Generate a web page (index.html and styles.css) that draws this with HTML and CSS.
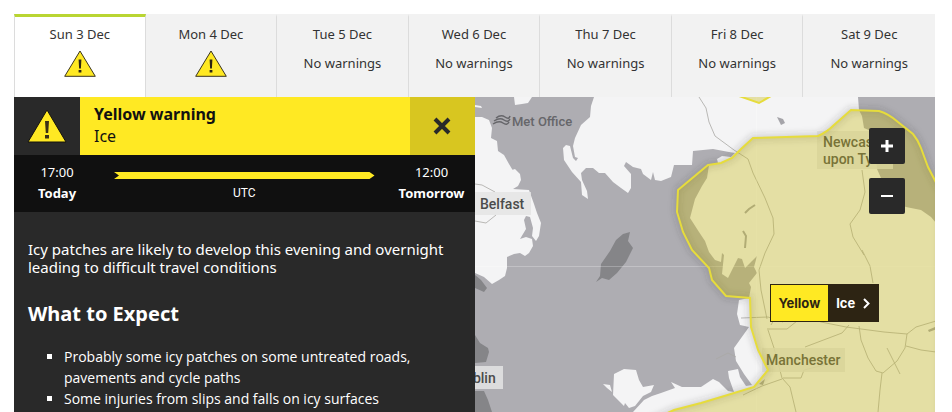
FILE: index.html
```html
<!DOCTYPE html>
<html lang="en">
<head>
  <meta charset="UTF-8">
  <meta name="viewport" content="width=device-width, initial-scale=1.0">
  <title>UK weather warnings</title>
  <link rel="stylesheet" href="styles.css">
</head>
<body>
  <nav class="days" aria-label="Warning days">
    <button class="day active">
      <span>Sun 3 Dec</span>
      <svg class="day-icon" viewBox="0 0 32 27" role="img" aria-label="Yellow warning">
        <path d="M16 1 31.3 26.3H.7Z" fill="#ffe923" stroke="#3a3420"/>
        <path d="M14.6 9.5h2.8l-.5 9h-1.8zM14.6 20h2.8v2.6h-2.8z" fill="#2d2413"/>
      </svg>
    </button>
    <button class="day">
      <span>Mon 4 Dec</span>
      <svg class="day-icon" viewBox="0 0 32 27" role="img" aria-label="Yellow warning">
        <path d="M16 1 31.3 26.3H.7Z" fill="#ffe923" stroke="#3a3420"/>
        <path d="M14.6 9.5h2.8l-.5 9h-1.8zM14.6 20h2.8v2.6h-2.8z" fill="#2d2413"/>
      </svg>
    </button>
    <button class="day"><span>Tue 5 Dec</span><span>No warnings</span></button>
    <button class="day"><span>Wed 6 Dec</span><span>No warnings</span></button>
    <button class="day"><span>Thu 7 Dec</span><span>No warnings</span></button>
    <button class="day"><span>Fri 8 Dec</span><span>No warnings</span></button>
    <button class="day"><span>Sat 9 Dec</span><span>No warnings</span></button>
  </nav>

  <main class="content">
    <section class="panel">
      <header class="panel-header">
        <div class="panel-icon">
          <svg width="40" height="34" viewBox="0 0 40 34" aria-hidden="true">
            <path d="M20 1 39 33H1Z" fill="#ffe923" stroke="#15130c"/>
            <path d="M18 12h4l-.8 12h-2.4zM18 26h4v3.5h-4z" fill="#3a3015"/>
          </svg>
        </div>
        <h1 class="panel-title">Yellow warning <span>Ice</span></h1>
        <button class="close" aria-label="Close">
          <svg width="18" height="18" viewBox="0 0 18 18" aria-hidden="true">
            <path d="M2 2 16 16M16 2 2 16" stroke="#292929" stroke-width="4"/>
          </svg>
        </button>
      </header>

      <div class="timeline">
        <div class="time"><span>17:00</span><b>Today</b></div>
        <div class="span">
          <div class="arrow"></div>
          <span class="zone">UTC</span>
        </div>
        <div class="time"><span>12:00</span><b>Tomorrow</b></div>
      </div>

      <div class="details">
        <p>Icy patches are likely to develop this evening and overnight leading to difficult travel conditions</p>
        <h2>What to Expect</h2>
        <ul>
          <li>Probably some icy patches on some untreated roads, pavements and cycle paths</li>
          <li>Some injuries from slips and falls on icy surfaces</li>
        </ul>
      </div>
    </section>

    <section class="map" aria-label="Map">
      <svg class="map-canvas" viewBox="474 97 461 315" preserveAspectRatio="xMinYMin slice">
        <defs>
          <filter id="soft" x="-20%" y="-20%" width="140%" height="140%"><feGaussianBlur stdDeviation="3"/></filter>
          <path id="area" d="M707 165 720 163 731 158 740 149 752 138 817 136Q826 132 833 125L850 110 878 111Q888 114 897 122L912 134Q917 140 920 148L927 167 940 192V425H640L673 410 700 403 720 397 753 387 767 370 757 350 750 327 749 298 725 296 711 280 708 268 691 250 682 232 676 212 677 190Z"/>
        </defs>
        <rect x="474" y="97" width="461" height="315" fill="#aeadb2"/>

        <!-- Ireland -->
        <g fill="#f4f4f5">
          <path d="M474 117 481 117 488 120 491 128 490 138 496 141 497 151 503 155 508 164 514 174 511 170 514 169 519 174 520 180 517 186 512 189 528 190 533 204 536 213 540 223 538 236 535 241 531 236 532 228 529 217 525 216 523 220 525 229 519 239 525 237 531 239 532 246 528 253 524 256 519 253 513 254 506 257 506 268 504 276 498 280 491 284 483 277 474 273Z"/>
          <path d="M513 97h18l-4 6-6 1-7 1ZM474 105l6 1 1 2-7-1Z"/>
        </g>
        <g fill="#858588">
          <path d="M474 275 480 280 486 288 483 292 474 288ZM474 335 479 343 487 348 488 352 485 362 474 363ZM474 391 483 391 487 400 491 412H474Z"/>
          <!-- Isle of Man -->
          <path d="M629 232 627 241 632 248 625 262 616 273 608 280 601 278 595 282 599 276 600 264 609 251 615 240 622 234Z"/>
        </g>

        <!-- Great Britain -->
        <path fill="#f4f4f5" d="M593 97 590 106 589 117 580 125 574 138 572 146 574 157 577 158 575 161 572 158 569 146 565 145 562 148 563 160 571 172 580 182 581 195 587 199 586 191 581 180 580 173 585 168 592 168 598 173 604 173 612 182 620 188 627 193 630 188 630 174 623 166 625 162 632 167 640 169 642 174 650 180 652 172 654 180 660 181 670 177 673 165 691 165 692 151 712 149 728 152 734 153 730 157 721 156 716 159 717 163 708 165 706 178 701 186 694 199 689 218 698 232 704 241 708 252 714 260 720 262 721 253 723 255 721 274 727 278 737 258 741 259 744 268 756 256 753 267 756 273 748 283 750 287 748 298 738 300 736 314 739 325 748 327 733 348 735 361 743 374 751 385 745 386 739 377 737 369 727 371 728 378 733 392 727 391 718 382 712 379 700 387 681 387 670 382 674 388 660 393 651 396 643 400 632 412H935V223L930 217 920 210 905 207 890 200 880 178 876 169 873 140 870 131 863 128 861 116 858 110 857 97Z"/>
        <path fill="#f4f4f5" d="M613 374 623 369 635 370 638 380 642 387 653 385 650 392 642 396 634 406 628 408 624 403 623 406 612 395ZM602 384 609 385 611 392 606 388Z"/>
        <path fill="#a5a4a9" d="M776 117 782 119 784 123 780 125 778 121ZM758 384 764 379 762 385ZM927 330 936 326 936 329 928 332Z"/>
        <path fill="none" stroke="#a5a4a9" stroke-width="2" d="M744 213 748 209 754 205M742 231 745 236 744 248"/>

        <!-- roads and grid -->
        <g fill="none" stroke="#a9a8a4" stroke-width=".8">
          <path d="M698 97 705 108 708 122 714 136 733 150 747 159 752 173 764 198 772 218 773 234 764 253 758 270 760 290 766 319M861 170 864 192 859 210 849 224 852 237 863 255"/>
          <path d="M767 330 773 348 781 378 789 387 795 412M782 378 800 378 803 370 835 362M770 325 780 308 820 322 845 327 883 332 906 334 915 327 935 321M804 347 841 333 848 325M766 329h20l10-8M858 326 860 340 867 358 875 371 882 373 896 361 904 348 906 334M881 373 879 390 877 412M886 348 899 374M905 346 920 350 935 352M781 379 761 386 742 395M740 318 767 317 782 322M715 359 727 353 735 357"/>
          <path d="M474 184 481 185 494 192M474 221 485 223 495 215M861 250 869 266 872 283"/>
        </g>
        <g stroke="#fff" stroke-opacity=".25"><path d="M474 266.500H935M755.500 97V412"/></g>

        <g class="place">
          <rect x="474" y="192" width="56" height="23"/><text x="479" y="209">Belfast</text>
          <rect x="474" y="366" width="28" height="23"/><text x="455" y="383">Dublin</text>
          <rect x="816" y="131" width="76" height="38"/><text x="822" y="147">Newcastle</text><text x="822" y="164">upon Tyne</text>
          <rect x="761" y="348" width="83" height="24"/><text x="765" y="365">Manchester</text>
        </g>

        <!-- warning areas -->
        <use href="#area" fill="none" stroke="#333" stroke-opacity=".2" stroke-width="6" filter="url(#soft)"/>
        <use href="#area" fill="#c8ba17" fill-opacity=".36" stroke="#e6dc3c" stroke-width="2"/>
        <path d="M738 96 758 103 770 96Z" fill="#c8ba17" fill-opacity=".36" stroke="#e6dc3c" stroke-width="2"/>

        <g fill="none" stroke="#66666a" stroke-width="1.500">
          <path d="M495 118q5-4 9-1t5-1M493 121q6-4 10-1t6-1M492 124q6-4 10-1t6-1"/>
        </g>
        <text class="brand" x="511" y="126">Met Office</text>
      </svg>

      <div class="zoom">
        <button aria-label="Zoom in"><svg width="12" height="12" viewBox="0 0 12 12"><path d="M0 6H12M6 0V12" stroke="#fff" stroke-width="3"/></svg></button>
        <button aria-label="Zoom out"><svg width="12" height="12" viewBox="0 0 12 12"><path d="M0 6H12" stroke="#fff" stroke-width="2"/></svg></button>
      </div>

      <a class="marker" href="#ice">
        <span class="level">Yellow</span>
        <span class="type">Ice
          <svg width="7" height="11" viewBox="0 0 7 11" aria-hidden="true"><path d="M1 1 5.500 5.500 1 10" fill="none" stroke="#fff" stroke-width="2"/></svg>
        </span>
      </a>
    </section>
  </main>
</body>
</html>
```
FILE: styles.css
```css
* { box-sizing: border-box; }
body {
  margin: 0;
  padding: 14px 17px 0 14px;
  height: 100vh;
  display: flex;
  flex-direction: column;
  overflow: hidden;
  background: #fff;
  font-family: "Noto Sans", "Open Sans", sans-serif;
}
button { font: inherit; border: 0; padding: 0; cursor: pointer; }

/* day tabs */
.days { display: grid; grid-template-columns: repeat(7, 1fr); }
.day {
  display: flex;
  flex-direction: column;
  align-items: center;
  gap: 9px;
  height: 83px;
  padding-top: 7px;
  border-top: 3px solid #f2f2f2;
  border-right: 1px solid #dcdcdc;
  background: #f2f2f2;
  color: #333;
  font-size: 13px;
  line-height: 20px;
}
.day:last-child { border-right: 0; }
.day.active { background: #fff; border-top-color: #b9d532; border-left: 1px solid #dcdcdc; }
.day-icon { width: 32px; height: 27px; margin-top: -3px; }

.content { flex: 1; min-height: 0; display: grid; grid-template-columns: 1fr 1fr; }

/* warning panel */
.panel { background: #292929; color: #fff; overflow: hidden; }
.panel-header { display: grid; grid-template-columns: 66px 1fr 65px; height: 58px; background: #ffe923; }
.panel-icon { display: flex; align-items: center; justify-content: center; background: #292929; }
.panel-title { margin: 0; padding: 6px 14px; font-size: 16px; line-height: 22px; font-weight: 700; color: #111; }
.panel-title span { display: block; font-weight: 400; }
.close { display: flex; align-items: center; justify-content: center; background: #d8c620; }

.timeline {
  display: grid;
  grid-template-columns: 86px 1fr 86px;
  height: 57px;
  padding-top: 7px;
  background: #101010;
  font-size: 13px;
  line-height: 21px;
}
.time { display: flex; flex-direction: column; align-items: center; }
.span { display: flex; flex-direction: column; align-items: center; padding: 10px 14px 0; }
.arrow {
  width: 100%;
  height: 7px;
  background: #ffe923;
  clip-path: polygon(0 0, calc(100% - 5px) 0, 100% 50%, calc(100% - 5px) 100%, 0 100%, 5px 50%);
}
.zone { margin-top: 4px; font-family: Roboto, sans-serif; font-size: 12px; }

.details { padding: 28px 14px; }
.details p { margin: 0; font-size: 15px; line-height: 18px; }
.details h2 { margin: 24px 0 18px; font-size: 20px; line-height: 28px; }
.details ul { margin: 0; padding-left: 36px; list-style: square; font-family: "Open Sans", sans-serif; font-size: 14px; line-height: 21px; }

/* map */
.map { position: relative; overflow: hidden; background: #aeadb2; }
.map-canvas { position: absolute; width: 100%; height: 100%; }
.place { font-family: Roboto, sans-serif; font-size: 14px; font-weight: 500; }
.place rect { fill: #e4e4e4; fill-opacity: .85; }
.place text { fill: #4b4b4b; }
.brand { font-family: Roboto, sans-serif; font-size: 13px; font-weight: 500; fill: #66666a; }

.zoom { position: absolute; top: 31px; right: 30px; display: grid; gap: 14px; }
.zoom button {
  width: 36px;
  height: 36px;
  display: flex;
  align-items: center;
  justify-content: center;
  border-radius: 2px;
  background: #292929;
}

.marker {
  position: absolute;
  top: 187px;
  left: 295px;
  display: flex;
  border: 1px solid #2d2413;
  color: #fff;
  background: #2d2413;
  font-family: Inter, sans-serif;
  font-size: 13px;
  font-weight: 700;
  line-height: 36px;
  text-decoration: none;
}
.level { padding: 0 8px; background: #ffe923; color: #2d2413; }
.type { display: flex; align-items: center; gap: 8px; padding: 0 8px; }
```
